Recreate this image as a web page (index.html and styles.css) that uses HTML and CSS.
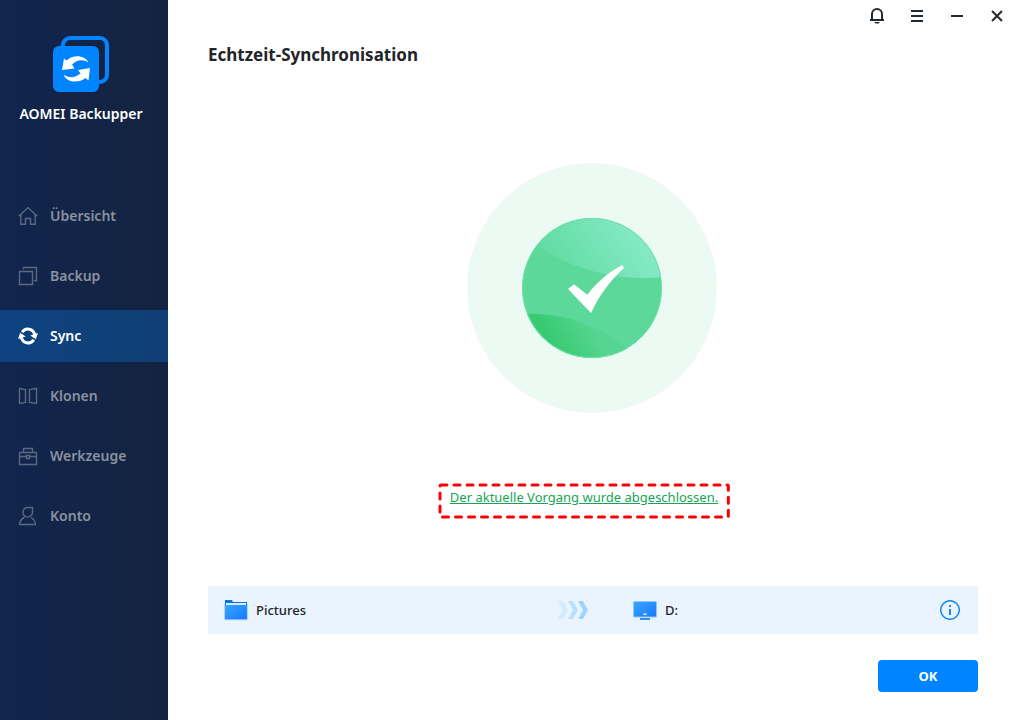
FILE: index.html
```html
<!DOCTYPE html>
<html lang="de">
<head>
<meta charset="utf-8">
<meta name="viewport" content="width=device-width, initial-scale=1">
<title>AOMEI Backupper</title>
<link rel="stylesheet" href="styles.css">
</head>
<body>
<div class="app">
  <aside class="sidebar">
    <div class="brand">
      <svg class="brand-logo" viewBox="0 0 56 56" aria-hidden="true">
        <rect x="10" y="2" width="44" height="44" rx="7" fill="none" stroke="#0084ff" stroke-width="4"/>
        <rect x="0" y="10" width="46" height="46" rx="6" fill="#0084ff"/>
        <path fill="#fff" d="M9 34 11 22.500 13.500 24.500C20 18 32 19 35.500 26.500C30 23 24 23.500 19 28.500L21.500 32.500Z"/>
        <path fill="#fff" d="M37 32 35.500 44.500 32.500 42C26 47.500 14 47 10.500 38.500C16 42.500 22 42 27.500 37.500L25 34Z"/>
      </svg>
      <span class="brand-name">AOMEI Backupper</span>
    </div>
    <nav class="menu">
      <a class="menu-item" href="#uebersicht">
        <svg class="menu-icon" viewBox="0 0 20 20" aria-hidden="true"><path d="M.7 10.300 10 1.600 19.300 10.300M2.800 8.800V18.300H7.500V12.500H12.500V18.300H17.200V8.800"/></svg>
        Übersicht
      </a>
      <a class="menu-item" href="#backup">
        <svg class="menu-icon" viewBox="0 0 20 20" aria-hidden="true"><path d="M1.500 5.500H14.500V18.500H1.500ZM5.500 3.500V1.500H18.500V14.500H16"/></svg>
        Backup
      </a>
      <a class="menu-item is-active" href="#sync" aria-current="page">
        <svg class="menu-icon" viewBox="0 0 20 20" aria-hidden="true">
          <path class="sync-arc" d="M4.200 6.200A6.800 6.800 0 0 1 16.600 8.500M15.800 13.800A6.800 6.800 0 0 1 3.400 11.500"/>
          <path class="sync-tip" d="M12.300 9.500 20 7 17.800 13.200ZM0 13 2.200 6.800 7.700 10.500Z"/>
        </svg>
        Sync
      </a>
      <a class="menu-item" href="#klonen">
        <svg class="menu-icon" viewBox="0 0 20 20" aria-hidden="true"><path d="M1.500 2.500 7.500 3.500V16.500L1.500 17.500ZM18.500 2.500 11.500 3.500V16.500L18.500 17.500Z"/></svg>
        Klonen
      </a>
      <a class="menu-item" href="#werkzeuge">
        <svg class="menu-icon" viewBox="0 0 20 20" aria-hidden="true"><path d="M1.500 6.500H18.500V18.500H1.500ZM5.500 6.500V2.500H14.500V6.500M1.500 10.500H8.500M11.500 10.500H18.500M8.500 9.500H11.500V12.500H8.500Z"/></svg>
        Werkzeuge
      </a>
      <a class="menu-item" href="#konto">
        <svg class="menu-icon" viewBox="0 0 20 20" aria-hidden="true"><path d="M14.500 1.500H10A4.800 4.800 0 1 0 14.500 6.500ZM6.500 11.500C3.500 12.800 1.800 15 1.500 18.500H17.500C17.200 15 15.500 12.800 13 11.500"/></svg>
        Konto
      </a>
    </nav>
  </aside>

  <main class="content">
    <div class="window-bar">
      <button class="window-button" type="button" aria-label="Benachrichtigungen">
        <svg viewBox="0 0 16 16" aria-hidden="true"><path d="M1 12H15M3 12V6A5 5 0 0 1 13 6V12"/><path class="solid" d="M5 14H11L9.500 15.500H6.500Z"/></svg>
      </button>
      <button class="window-button" type="button" aria-label="Menü">
        <svg viewBox="0 0 16 16" aria-hidden="true"><path d="M2 3H14M2 8H14M2 13H14"/></svg>
      </button>
      <button class="window-button" type="button" aria-label="Minimieren">
        <svg viewBox="0 0 16 16" aria-hidden="true"><path d="M2 8H14"/></svg>
      </button>
      <button class="window-button" type="button" aria-label="Schließen">
        <svg viewBox="0 0 16 16" aria-hidden="true"><path d="M3 3 13 13M13 3 3 13"/></svg>
      </button>
    </div>

    <h1 class="title">Echtzeit-Synchronisation</h1>

    <section class="result">
      <svg class="result-mark" viewBox="0 0 250 250" role="img" aria-label="Erfolgreich">
        <defs>
          <linearGradient id="shine" x1="90" y1="110" x2="165" y2="60" gradientUnits="userSpaceOnUse">
            <stop offset="0" stop-color="#62dba2"/><stop offset="1" stop-color="#84eac6"/>
          </linearGradient>
          <linearGradient id="shade" x1="85" y1="180" x2="122" y2="158" gradientUnits="userSpaceOnUse">
            <stop offset="0" stop-color="#37ca70"/><stop offset="1" stop-color="#56d592"/>
          </linearGradient>
          <clipPath id="disc"><circle cx="125" cy="125" r="70"/></clipPath>
        </defs>
        <circle cx="125" cy="125" r="125" fill="#ecfaf4"/>
        <g clip-path="url(#disc)">
          <circle cx="125" cy="125" r="70" fill="#5cd89a"/>
          <path fill="url(#shine)" d="M68 82C105 106 150 119 196 114V50H68Z"/>
          <path fill="url(#shade)" d="M54 151C100 149 137 165 164 188V200H54Z"/>
        </g>
        <circle cx="125" cy="125" r="69.500" fill="none" stroke="#6fe0ab"/>
        <path fill="#fff" d="M101 126 107 121.300 120.300 131.700C131 118 142 109 155.300 102L157 105C144 117 134 129 124 150Z"/>
      </svg>
      <div class="note">
        <svg class="note-frame" aria-hidden="true"><rect class="note-dash" width="100%" height="100%" rx="1"/></svg>
        <a class="note-link" href="#protokoll">Der aktuelle Vorgang wurde abgeschlossen.</a>
      </div>
    </section>

    <section class="task">
      <div class="place">
        <svg class="place-icon" viewBox="0 0 24 24" aria-hidden="true">
          <defs><linearGradient id="blue" x1="0" y1="0" x2="1" y2="1"><stop offset="0" stop-color="#35a9ff"/><stop offset="1" stop-color="#1a75ff"/></linearGradient></defs>
          <path fill="#0c74e0" d="M1 2H8L9 4H23V10H1Z"/>
          <rect x="2" y="5" width="20" height="3" fill="#d8ecff"/>
          <rect x="1" y="7" width="22" height="14.500" fill="url(#blue)"/>
          <path fill="none" stroke="#7cc0ff" stroke-width=".7" d="M.7 6V21.700H23.300V6"/>
        </svg>
        <span>Pictures</span>
      </div>
      <svg class="arrows" viewBox="0 0 30 18" aria-hidden="true">
        <path fill="#d3ebff" d="M0 0H5L10 9 5 18H0L5 9Z"/>
        <path fill="#b9e0ff" d="M10 0H15L20 9 15 18H10L15 9Z"/>
        <path fill="#9fd4ff" d="M20 0H25L30 9 25 18H20L25 9Z"/>
      </svg>
      <div class="place">
        <svg class="place-icon" viewBox="0 0 24 24" aria-hidden="true">
          <rect x=".5" y="3.500" width="23" height="15.500" rx="1" fill="url(#blue)" stroke="#8cc8ff"/>
          <rect x="10.500" y="15.500" width="3" height="1.500" fill="#fff"/>
          <rect x="7" y="20" width="10" height="2" fill="#2f90f5"/>
        </svg>
        <span>D:</span>
      </div>
      <button class="info" type="button" aria-label="Informationen">
        <svg viewBox="0 0 20 20" aria-hidden="true"><circle cx="10" cy="10" r="9.300"/><path class="info-sign" d="M10 5V7M10 9V15"/></svg>
      </button>
    </section>

    <div class="actions">
      <button class="ok" type="button">OK</button>
    </div>
  </main>
</div>
</body>
</html>
```
FILE: styles.css
```css
* {
  box-sizing: border-box;
}

body {
  margin: 0;
  background: #fff;
  color: #1f2529;
  font: 13px/20px "Noto Sans", "Open Sans", sans-serif;
}

button {
  padding: 0;
  border: 0;
  background: none;
  font: inherit;
  cursor: pointer;
}

svg {
  display: block;
}

.app {
  display: grid;
  grid-template-columns: 168px 1fr;
  min-height: 100vh;
}

.sidebar {
  background: linear-gradient(90deg, #11254e, #14233f);
}

.brand {
  display: flex;
  flex-direction: column;
  align-items: center;
  gap: 12px;
  padding: 36px 6px 66px 0;
  color: #fff;
  font-size: 14px;
  font-weight: 600;
}

.brand-logo {
  width: 56px;
  height: 56px;
}

.menu {
  display: flex;
  flex-direction: column;
  gap: 8px;
}

.menu-item {
  display: flex;
  align-items: center;
  gap: 12px;
  height: 52px;
  padding-left: 18px;
  color: #8b919e;
  font-size: 14px;
  font-weight: 600;
  text-decoration: none;
}

.menu-icon {
  width: 20px;
  height: 20px;
  fill: none;
  stroke: #5c6983;
  stroke-width: 1.4;
}

.is-active {
  background: linear-gradient(90deg, #0e4283, #0f3f73);
  color: #fff;
}

.sync-arc {
  stroke: #fff;
  stroke-width: 3;
}

.sync-tip {
  fill: #fff;
  stroke: none;
}

.content {
  display: flex;
  flex-direction: column;
  min-width: 0;
}

.window-bar {
  display: flex;
  justify-content: flex-end;
  gap: 24px;
  padding: 8px 7px;
}

.window-button {
  width: 16px;
  height: 16px;
}

.window-button svg {
  fill: none;
  stroke: #22292e;
  stroke-width: 2;
}

.window-button .solid {
  fill: #22292e;
  stroke: none;
}

.title {
  margin: 10px 34px 0 40px;
  font-size: 17px;
  line-height: 26px;
  font-weight: 700;
}

.result {
  display: flex;
  flex: 1;
  flex-direction: column;
  align-items: center;
  gap: 71px;
  padding: 95px 36px 68px 40px;
}

.result-mark {
  width: 250px;
  height: 250px;
}

.note {
  position: relative;
  margin-right: 16px;
  padding: 3px 11px 11px;
}

.note-frame {
  position: absolute;
  inset: 1px;
  width: calc(100% - 2px);
  height: calc(100% - 2px);
  overflow: visible;
  pointer-events: none;
}

.note-dash {
  fill: none;
  stroke: #fb0007;
  stroke-width: 3;
  stroke-linecap: round;
  stroke-dasharray: 6 7;
}

.note-link {
  color: #17a555;
}

.task {
  display: grid;
  grid-template-columns: 334fr 75px 307fr 20px;
  align-items: center;
  height: 48px;
  margin: 0 34px 26px 40px;
  padding: 0 18px 0 16px;
  background: #e9f4ff;
}

.place {
  display: flex;
  align-items: center;
  gap: 8px;
  font-weight: 500;
}

.place-icon {
  width: 24px;
  height: 24px;
}

.arrows {
  width: 30px;
  height: 18px;
}

.info {
  width: 20px;
  height: 20px;
}

.info svg {
  fill: none;
  stroke: #1688f8;
  stroke-width: 1.5;
}

.info .info-sign {
  stroke-width: 2;
}

.actions {
  display: flex;
  justify-content: flex-end;
  padding: 0 34px 28px;
}

.ok {
  width: 100px;
  height: 32px;
  border-radius: 4px;
  background: #0084ff;
  color: #fff;
  font-weight: 700;
}
```
